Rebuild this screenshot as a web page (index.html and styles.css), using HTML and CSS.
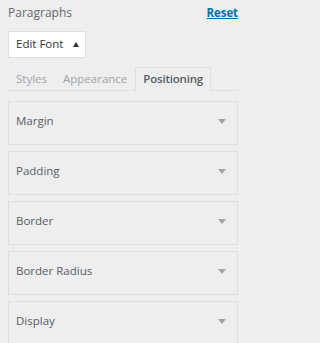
FILE: index.html
```html
<!DOCTYPE html>
<html>
<head>
<meta charset="utf-8">
<link rel="stylesheet" href="styles.css">
</head>
<body>
<div class="sidebar">
  <div class="header">
    <span class="title">Paragraphs</span>
    <a class="reset" href="#">Reset</a>
  </div>
  <div class="edit-font">
    <span>Edit Font</span>
    <span class="caret-up"></span>
  </div>
  <div class="tabs">
    <span class="tab">Styles</span>
    <span class="tab">Appearance</span>
    <span class="tab active">Positioning</span>
  </div>
  <div class="panels">
    <div class="panel"><span class="panel-title">Margin</span><span class="caret-down"></span></div>
    <div class="panel"><span class="panel-title">Padding</span><span class="caret-down"></span></div>
    <div class="panel"><span class="panel-title">Border</span><span class="caret-down"></span></div>
    <div class="panel"><span class="panel-title">Border Radius</span><span class="caret-down"></span></div>
    <div class="panel"><span class="panel-title">Display</span><span class="caret-down"></span></div>
  </div>
</div>
</body>
</html>
```

FILE: styles.css
```css
html, body {
  margin: 0;
  padding: 0;
  background: #eeeeee;
}
body {
  font-family: "Open Sans", "Noto Sans", sans-serif;
  color: #555d66;
  overflow: hidden;
}
.sidebar {
  padding: 5px 13px 0 8px;
  width: 230px;
}
.header {
  display: flex;
  justify-content: space-between;
  align-items: flex-start;
  height: 16px;
}
.title {
  font-size: 12px;
  line-height: 16px;
  color: #62686e;
}
.reset {
  font-size: 11.5px;
  font-weight: 700;
  color: #0073aa;
  text-decoration: underline;
  line-height: 16px;
  letter-spacing: -0.1px;
}
.edit-font {
  margin-top: 10px;
  width: 78px;
  height: 27px;
  box-sizing: border-box;
  background: #ffffff;
  border: 1px solid #dddddd;
  display: flex;
  align-items: center;
  justify-content: space-between;
  padding: 0 6px 1px 7px;
  font-size: 11.5px;
  line-height: 16px;
  color: #333333;
  white-space: nowrap;
}
.caret-up {
  width: 0;
  height: 0;
  border-left: 3.5px solid transparent;
  border-right: 3.5px solid transparent;
  border-bottom: 5px solid #333333;
}
.tabs {
  display: flex;
  margin-top: 9px;
  border-bottom: 1px solid #dddddd;
}
.tab {
  border: 1px solid transparent;
  border-bottom: none;
  padding: 0 7px;
  height: 22px;
  line-height: 21px;
  font-size: 11.5px;
  color: #9ea3a8;
  white-space: nowrap;
}
.tab.active {
  border-color: #dddddd;
  font-weight: 600;
  color: #555d66;
  margin-bottom: -1px;
  height: 23px;
  background: #eeeeee;
  letter-spacing: -0.2px;
}
.panels {
  display: flex;
  flex-direction: column;
  gap: 6px;
  margin-top: 10px;
}
.panel {
  border: 1px solid #dddddd;
  height: 44px;
  box-sizing: border-box;
  display: flex;
  align-items: flex-start;
  justify-content: space-between;
  padding: 11px 11px 0 7px;
  font-size: 11.5px;
  line-height: 16px;
}
.caret-down {
  margin-top: 6px;
  width: 0;
  height: 0;
  border-left: 4px solid transparent;
  border-right: 4px solid transparent;
  border-top: 5px solid #a0a5aa;
}
```
